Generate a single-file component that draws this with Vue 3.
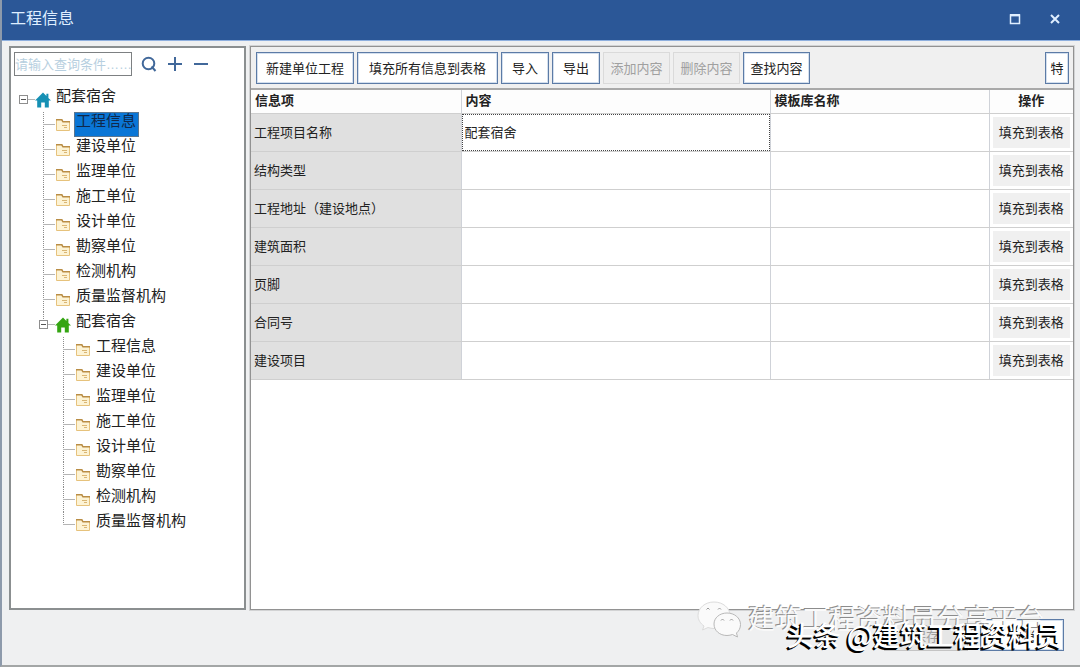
<script setup>
import { ref } from 'vue'

const units = ['工程信息', '建设单位', '监理单位', '施工单位', '设计单位', '勘察单位', '检测机构', '质量监督机构']
const selected = ref('p0')
const keyword = ref('')

const tools = [
  { text: '新建单位工程', size: 'w-lg' },
  { text: '填充所有信息到表格', size: 'w-xl' },
  { text: '导入', size: 'w-sm' },
  { text: '导出', size: 'w-sm' },
  { text: '添加内容', size: 'w-md', disabled: true },
  { text: '删除内容', size: 'w-md', disabled: true },
  { text: '查找内容', size: 'w-md' }
]

const rows = ref([
  { name: '工程项目名称', value: '配套宿舍' },
  { name: '结构类型', value: '' },
  { name: '工程地址（建设地点）', value: '' },
  { name: '建筑面积', value: '' },
  { name: '页脚', value: '' },
  { name: '合同号', value: '' },
  { name: '建设项目', value: '' }
])
</script>

<template>
  <div class="window">
    <header class="titlebar">
      <h1>工程信息</h1>
      <button class="win-btn" aria-label="最大化">
        <svg width="12" height="12" viewBox="0 0 12 12"><path d="M1.5 2H10.5V10.5H1.5Z" fill="none" stroke="#dfeeff" stroke-width="1.5" /><path d="M1 2.2H11" stroke="#dfeeff" stroke-width="2.4" /></svg>
      </button>
      <button class="win-btn" aria-label="关闭窗口">
        <svg width="12" height="12" viewBox="0 0 12 12"><path d="M2 2L10 10M10 2L2 10" stroke="#dfeeff" stroke-width="2" /></svg>
      </button>
    </header>

    <main class="body">
      <aside class="side">
        <div class="search">
          <input v-model="keyword" type="text" aria-label="查询条件" placeholder="请输入查询条件……" />
          <button class="icon-btn" aria-label="查询">
            <svg width="16" height="16" viewBox="0 0 16 16" fill="none" stroke="#41689a" stroke-width="2"><circle cx="7.5" cy="7.5" r="5.8" /><path d="M10.5 10.5L14.5 15" /></svg>
          </button>
          <button class="icon-btn" aria-label="展开">
            <svg width="16" height="16" viewBox="0 0 16 16" stroke="#41689a" stroke-width="2"><path d="M1 8H15M8 1V15" /></svg>
          </button>
          <button class="icon-btn" aria-label="收起">
            <svg width="16" height="16" viewBox="0 0 16 16" stroke="#41689a" stroke-width="2"><path d="M1 8H15" /></svg>
          </button>
        </div>

        <ul class="tree root">
          <li>
            <div class="node">
              <button class="toggle" aria-label="折叠"></button>
              <svg class="ico" width="16" height="16" viewBox="0 0 16 16"><path d="M8 0.5L0 8.5H2.2V15.500H6.2V10.5H9.8V15.500H13.8V8.5H16L13.4 6V1.800H11.4V4Z" fill="#1590b4" /></svg>
              <button class="label">配套宿舍</button>
            </div>
            <ul class="tree branch">
              <li v-for="(u, i) in units" :key="u">
                <div class="node">
                  <svg class="ico" width="16" height="16" viewBox="0 0 16 16"><path d="M1.5 4V13.5H14.5V4.5H8L7 2.5H1.5Z" fill="#fdf3d4" stroke="#e6c27c" /><path d="M1 2.8H6.8L8 4.8H15" fill="none" stroke="#b98d45" stroke-width="1.5" /><path d="M7 8.5H12M9 10.5H12" stroke="#d9b573" /></svg>
                  <button class="label" :class="{ active: selected === 'p' + i }" @click="selected = 'p' + i">{{ u }}</button>
                </div>
              </li>
              <li>
                <div class="node">
                  <button class="toggle" aria-label="折叠"></button>
                  <svg class="ico" width="16" height="16" viewBox="0 0 16 16"><path d="M8 0.5L0 8.5H2.2V15.500H6.2V10.5H9.8V15.500H13.8V8.5H16L13.4 6V1.800H11.4V4Z" fill="#34a512" /></svg>
                  <button class="label">配套宿舍</button>
                </div>
                <ul class="tree branch">
                  <li v-for="(u, i) in units" :key="u">
                    <div class="node">
                      <svg class="ico" width="16" height="16" viewBox="0 0 16 16"><path d="M1.5 4V13.5H14.5V4.5H8L7 2.5H1.5Z" fill="#fdf3d4" stroke="#e6c27c" /><path d="M1 2.8H6.8L8 4.8H15" fill="none" stroke="#b98d45" stroke-width="1.5" /><path d="M7 8.5H12M9 10.5H12" stroke="#d9b573" /></svg>
                      <button class="label" :class="{ active: selected === 's' + i }" @click="selected = 's' + i">{{ u }}</button>
                    </div>
                  </li>
                </ul>
              </li>
            </ul>
          </li>
        </ul>
      </aside>

      <section class="content">
        <div class="toolbar">
          <button v-for="t in tools" :key="t.text" class="btn" :class="t.size" :disabled="t.disabled">{{ t.text }}</button>
          <button class="btn special">特</button>
        </div>
        <table>
          <colgroup>
            <col class="c-name" /><col /><col class="c-lib" /><col class="c-op" />
          </colgroup>
          <thead>
            <tr><th>信息项</th><th>内容</th><th>模板库名称</th><th class="op">操作</th></tr>
          </thead>
          <tbody>
            <tr v-for="(r, i) in rows" :key="r.name">
              <td class="name">{{ r.name }}</td>
              <td class="value" :class="{ focus: i === 0 }"><input v-model="r.value" type="text" :aria-label="r.name" /></td>
              <td></td>
              <td class="op"><button class="fill">填充到表格</button></td>
            </tr>
          </tbody>
        </table>
      </section>
    </main>

    <footer class="footer">
      <button class="btn foot" disabled>保存</button>
      <button class="btn foot">取消</button>
    </footer>

    <div class="mark-soft">
      <svg width="44" height="38" viewBox="0 0 44 38">
        <path d="M17 1C8 1 1 7 1 14.5C1 19 3.500 22.500 7 25L5.500 29L11 26.500C13 27.200 15 27.500 17 27.500C26 27.500 33 21.500 33 14.500C33 7 26 1 17 1Z" fill="#fafafa" stroke="#dcdcdc" />
        <path d="M30 12C22.500 12 17 17 17 23C17 29.500 22.500 34.500 30 34.500C32 34.500 34 34 35.500 33.500L40.500 36L39.500 32C42 30 43.500 27 43.500 23.500C43.500 17 37.500 12 30 12Z" fill="#fafafa" stroke="#b8b8b8" />
        <path d="M9.500 8.500Q11 5.500 12.500 8.500M21 8.500Q22.500 5.500 24 8.500M24 19.500Q25.500 16.500 27 19.500M33 19.500Q34.500 16.500 36 19.500" fill="none" stroke="#999" />
      </svg>
      <span>建筑工程资料员分享平台</span>
    </div>
    <div class="mark-bold">头条 @建筑工程资料员</div>
  </div>
</template>

<style>
html, body { height: 100%; overflow: hidden; }
#app { height: 100%; }
</style>

<style scoped>
* { box-sizing: border-box; }
.window {
  position: relative;
  display: flex;
  flex-direction: column;
  height: 100vh;
  background: #eff0f1;
  border-left: 2px solid #8d9aab;
  border-bottom: 2px solid #a3a6a6;
  font-family: "Liberation Sans", "Noto Sans CJK SC", sans-serif;
  font-size: 13px;
  color: #222;
}
button, input { font: inherit; color: inherit; margin: 0; }
.titlebar {
  display: flex;
  align-items: center;
  flex: none;
  height: 41px;
  padding: 0 13px 2px 8px;
  background: #2b5797;
  border-bottom: 1px solid #8fb0df;
  color: #dfeeff;
}
.titlebar h1 { flex: 1; margin: 0; font-size: 16px; font-weight: 400; line-height: 38px; }
.win-btn {
  display: flex;
  align-items: center;
  justify-content: center;
  width: 24px;
  height: 24px;
  margin-left: 16px;
  padding: 0;
  border: 0;
  background: none;
}
.body { flex: 1; min-height: 0; display: flex; gap: 4px; padding: 5px 6px 0 7px; }
.side { flex: none; width: 237px; padding: 4px 3px; background: #fff; border: 2px solid #8b8f90; }
.search { display: flex; align-items: center; height: 24px; }
.search input {
  width: 118px;
  height: 24px;
  margin-right: 4px;
  padding: 0;
  border: 1px solid #7d8082;
  background: #fff;
}
.search input::placeholder { color: #b7cfe0; opacity: 1; }
.icon-btn { display: flex; justify-content: center; width: 26px; padding: 0; border: 0; background: none; }

.tree { list-style: none; margin: 0; padding: 0 0 0 20px; font-size: 15px; }
.tree.root { padding: 11px 0 0 5px; }
.tree li { position: relative; }
.branch > li::before {
  content: "";
  position: absolute;
  left: 4px;
  top: 0;
  bottom: 0;
  border-left: 1px dotted #8c8c8c;
}
.branch > li:last-child::before { bottom: auto; height: 13px; }
.node { position: relative; display: flex; align-items: center; height: 25px; padding-left: 16px; }
.node::before {
  content: "";
  position: absolute;
  left: 4px;
  top: 12px;
  width: 12px;
  border-top: 1px solid #b4b4b4;
}
.toggle {
  position: absolute;
  left: 0;
  top: 8px;
  width: 9px;
  height: 9px;
  padding: 0;
  border: 1px solid #8e8e8e;
  background: linear-gradient(#555, #555) center / 5px 1px no-repeat #fff;
}
.ico { flex: none; margin-right: 3px; }
.label {
  height: 25px;
  padding: 0 2px 8px 1px;
  border: 1px solid transparent;
  background: none;
  line-height: 15px;
  white-space: nowrap;
}
.label.active { background: #0a76d6; border-color: #5b7690; color: #10284a; }

.content { flex: 1; min-width: 0; background: #fff; border: 1px solid #929292; outline: 1px solid #d2d3d4; }
.toolbar {
  display: flex;
  align-items: center;
  gap: 3px;
  height: 43px;
  padding: 0 4px 0 5px;
  background: #f0f0f0;
  border-bottom: 2px solid #a9a9a9;
}
.btn {
  height: 32px;
  padding: 0;
  border: 1px solid #5c7ba6;
  box-shadow: inset 0 0 0 1px #d3dfee;
  background: #fff;
  white-space: nowrap;
}
.btn:disabled { border-color: #dadada; box-shadow: none; background: #eee; color: #a0a0a0; }
.w-sm { width: 48px; }
.w-md { width: 67px; }
.w-lg { width: 98px; }
.w-xl { width: 141px; }
.special { width: 24px; margin-left: auto; }

table { width: 100%; table-layout: fixed; border-collapse: collapse; }
.c-name { width: 210px; }
.c-lib { width: 219px; }
.c-op { width: 84px; }
th { height: 23px; padding: 0 4px; text-align: left; font-weight: 700; line-height: 18px; background: #fdfdfd; }
th, td { border-right: 1px solid #cfd2d8; border-bottom: 1px solid #cfcfcf; }
th:last-child, td:last-child { border-right: 0; }
td { height: 38px; padding: 0 3px 2px; }
td.name { background: #e0e0e0; }
td.value { padding: 0; }
td.value input { display: block; width: 100%; height: 37px; padding: 0 3px 2px; border: 0; background: none; outline: 0; }
td.focus input { border: 1px dotted #444; padding: 0 2px 1px; }
th.op { text-align: center; }
td.op { padding: 3px; }
.fill { display: block; width: 100%; height: 31px; padding: 0 0 2px; border: 0; background: #f0f0f0; }

.footer { flex: none; display: flex; justify-content: flex-end; gap: 12px; height: 55px; padding: 9px 16px 0 0; }
.foot { width: 84px; }
.foot:disabled { border-color: #c4c4c4; background: #e6e6e6; }

.mark-soft {
  position: absolute;
  right: 35px;
  bottom: 26px;
  display: flex;
  align-items: center;
  gap: 7px;
  font-size: 27px;
  line-height: 38px;
  color: #fafafa;
  text-shadow: -1px -1px 0 #8c8c8c;
  white-space: nowrap;
  pointer-events: none;
}
.mark-bold {
  position: absolute;
  right: 18px;
  bottom: 11px;
  font-family: "Noto Sans CJK SC", sans-serif;
  font-size: 27px;
  font-weight: 500;
  line-height: 38px;
  color: #fff;
  text-shadow: -1px 1px 0 #000, -2px 2px 0 #000;
  white-space: nowrap;
  pointer-events: none;
}
</style>
